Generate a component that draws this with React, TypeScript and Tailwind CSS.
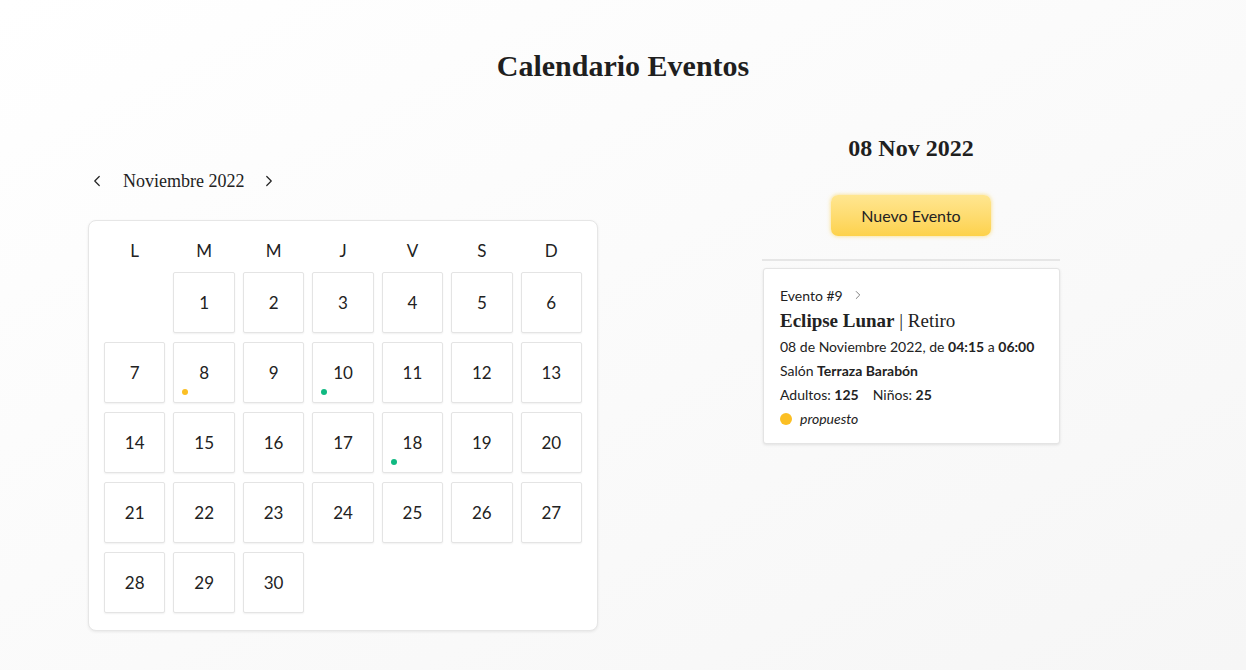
import { ChevronLeft, ChevronRight } from "lucide-react";

const serif = { fontFamily: '"Liberation Serif", "DejaVu Serif", serif' };

type Day = { n: number; dot?: "yellow" | "green" };

const days: Day[] = Array.from({ length: 30 }, (_, i) => ({ n: i + 1 }));
days[7].dot = "yellow";
days[9].dot = "green";
days[17].dot = "green";

const weekDays = ["L", "M", "M", "J", "V", "S", "D"];

function DayCell({ day }: { day: Day }) {
  return (
    <div className="relative h-[61px] bg-white border border-[#e4e4e4] rounded-[2px] shadow-[0_1px_2px_rgba(0,0,0,0.06)] flex items-center justify-center text-[17px] text-[#222]">
      {day.n}
      {day.dot && (
        <span
          className={
            "absolute left-[8px] bottom-[7px] w-[6px] h-[6px] rounded-full " +
            (day.dot === "yellow" ? "bg-[#fbbf24]" : "bg-[#10b981]")
          }
        />
      )}
    </div>
  );
}

export default function App() {
  return (
    <main
      className="min-h-[670px] w-full bg-gradient-to-br from-white to-[#f6f6f6] text-[#1f1f1f]"
      style={{ fontFamily: '"Lato", "Noto Sans", sans-serif' }}
    >
      <h1 className="text-center text-[30px] font-bold pt-[44px] leading-[44px]" style={serif}>
        Calendario Eventos
      </h1>

      <div className="flex pl-[88px] mt-[44px]">
        {/* Calendar */}
        <section className="w-[510px] pt-[36px]">
          <div className="flex items-center h-[26px] mb-[26px]">
            <ChevronLeft size={18} strokeWidth={1.6} className="text-[#222]" />
            <span className="ml-[17px] text-[18px] text-[#222]" style={serif}>
              Noviembre 2022
            </span>
            <ChevronRight size={18} strokeWidth={1.6} className="ml-[16px] text-[#222]" />
          </div>

          <div className="bg-white border border-[#e6e6e6] rounded-[8px] shadow-[0_1px_3px_rgba(0,0,0,0.08)] px-[15px] pt-[16px] pb-[17px]">
            <div className="grid grid-cols-7 gap-x-[8px] h-[28px] mb-[7px]">
              {weekDays.map((w, i) => (
                <div key={i} className="flex items-center justify-center text-[17px] text-[#222]">
                  {w}
                </div>
              ))}
            </div>
            <div className="grid grid-cols-7 gap-x-[8px] gap-y-[9px]">
              <div />
              {days.map((d) => (
                <DayCell key={d.n} day={d} />
              ))}
            </div>
          </div>
        </section>

        {/* Day panel */}
        <section className="w-[298px] ml-[164px] flex flex-col items-center">
          <h2 className="text-[24px] font-bold leading-[32px]" style={serif}>
            08 Nov 2022
          </h2>
          <button className="mt-[31px] w-[160px] h-[41px] rounded-[7px] bg-gradient-to-b from-[#ffe690] to-[#fdd24a] shadow-[0_0_4px_rgba(250,200,40,0.6)] text-[16px] text-[#222]">
            Nuevo Evento
          </button>
          <div className="mt-[23px] w-full h-[2px] bg-[#e6e6e6]" />
          <div className="mt-[7px] w-[297px] self-end bg-white border border-[#e4e4e4] rounded-[3px] shadow-[0_1px_3px_rgba(0,0,0,0.1)] px-[16px] pt-[14px] pb-[12px] text-[14px] text-[#222]">
            <div className="flex items-center h-[24px]">
              Evento #9
              <ChevronRight size={14} strokeWidth={1.4} className="ml-[8px] text-[#666]" />
            </div>
            <div className="text-[19px] leading-[28px]" style={serif}>
              <span className="font-bold">Eclipse Lunar</span> | Retiro
            </div>
            <div className="leading-[24px]">
              08 de Noviembre 2022, de <b>04:15</b> a <b>06:00</b>
            </div>
            <div className="leading-[24px]">
              Salón <b>Terraza Barabón</b>
            </div>
            <div className="leading-[24px]">
              Adultos: <b>125</b>
              <span className="ml-[14px]">Niños:</span> <b>25</b>
            </div>
            <div className="leading-[24px] flex items-center">
              <span className="w-[12px] h-[12px] rounded-full bg-[#fbbf24] mr-[8px]" />
              <i>propuesto</i>
            </div>
          </div>
        </section>
      </div>
    </main>
  );
}
